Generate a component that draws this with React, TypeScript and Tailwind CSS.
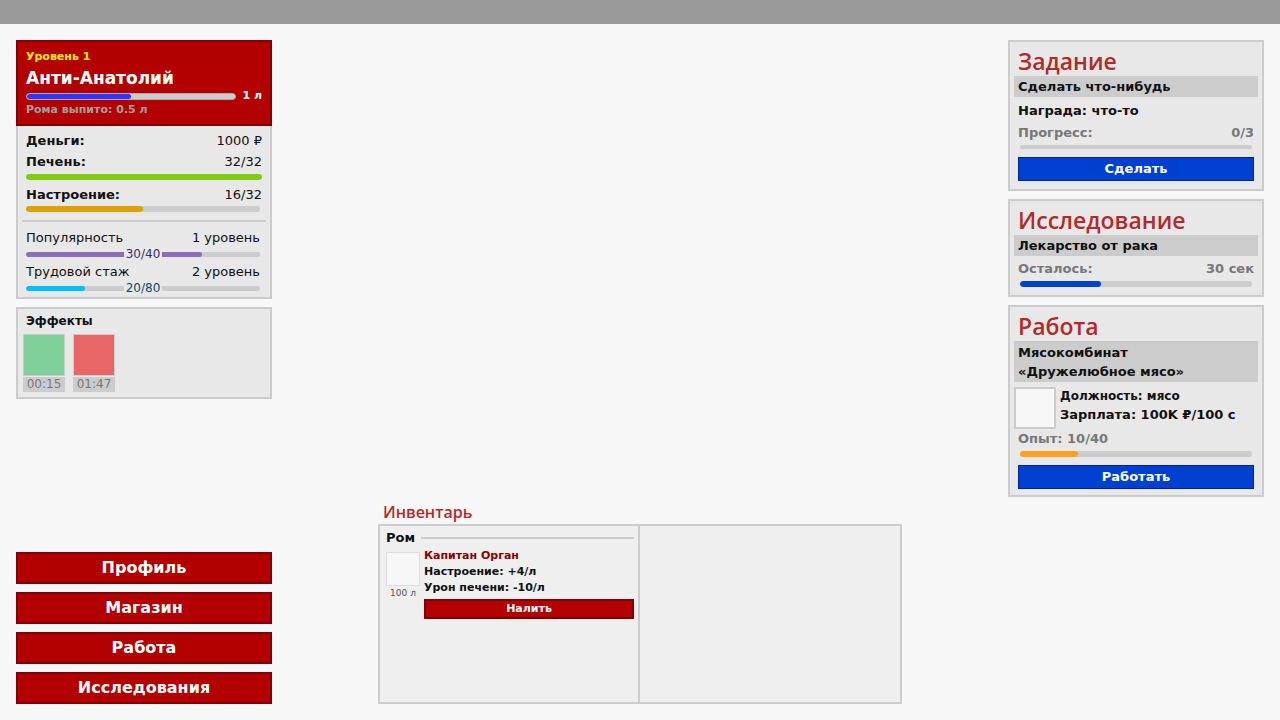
import React from "react";

const F = { fontFamily: '"DejaVu Sans", "Open Sans", sans-serif' };
const T = { fontFamily: '"Open Sans", "DejaVu Sans", sans-serif' };

function Bar({ pct, color, track = "bg-[#cccccc]", h = "h-[6px]" }: { pct: number; color: string; track?: string; h?: string }) {
  return (
    <div className={`w-full ${h} rounded-full ${track} overflow-hidden`}>
      <div className={`h-full rounded-full ${color}`} style={{ width: `${pct}%` }} />
    </div>
  );
}

function LabeledBar({ pct, color, label, labelColor }: { pct: number; color: string; label: string; labelColor: string }) {
  return (
    <div className="relative h-[14px] flex items-center">
      <div className="w-full h-[5px] rounded-full bg-[#cccccc] overflow-hidden">
        <div className={`h-full rounded-full ${color}`} style={{ width: `${pct}%` }} />
      </div>
      <div className="absolute inset-0 flex items-center justify-center">
        <span className={`px-[2px] bg-[#e8e8e8] text-[12px] leading-[14px] ${labelColor}`}>{label}</span>
      </div>
    </div>
  );
}

function NavButton({ children }: { children: React.ReactNode }) {
  return (
    <div className="h-[32px] bg-[#b30000] border-2 border-[#800000] flex items-center justify-center text-white text-[16px] font-bold">
      {children}
    </div>
  );
}

function Panel({ title, pb, children }: { title: string; pb: string; children: React.ReactNode }) {
  return (
    <div className={`bg-[#e8e8e8] border-2 border-[#cccccc] px-[4px] pt-[4px] ${pb}`}>
      <div className="px-[4px] h-[30px] leading-[30px] text-[23px] font-semibold text-[#b22a2a]" style={T}>{title}</div>
      {children}
    </div>
  );
}

function Band({ children, h = "h-[21px]" }: { children: React.ReactNode; h?: string }) {
  return (
    <div className={`bg-[#cccccc] ${h} px-[4px] flex flex-col justify-center text-[13px] leading-[19px] font-bold text-[#111]`}>{children}</div>
  );
}

function BlueButton({ children }: { children: React.ReactNode }) {
  return (
    <div className="mx-[4px] h-[24px] bg-[#0040d0] border border-[#0020a0] flex items-center justify-center text-white text-[13px] font-bold">
      {children}
    </div>
  );
}

export default function App() {
  return (
    <div className="w-[1280px] h-[720px] bg-[#f7f7f7] flex flex-col text-[#111]" style={F}>
      <div className="h-[24px] bg-[#9a9a9a]" />
      <div className="flex-1 flex p-[16px] min-h-0">
        {/* Left column */}
        <div className="w-[256px] flex flex-col">
          <div className="h-[86px] bg-[#b30000] border-2 border-[#800000] px-[8px] pt-[8px]">
            <div className="h-[14px] leading-[14px] text-[11px] font-bold text-[#ffee00]">Уровень 1</div>
            <div className="mt-[4px] h-[20px] leading-[20px] text-[17px] font-bold text-white">Анти-Анатолий</div>
            <div className="mt-[2px] h-[12px] flex items-center gap-[6px]">
              <div className="flex-1 h-[7px] rounded-full bg-[#cccccc] border border-[#aaaaaa] overflow-hidden">
                <div className="h-full w-1/2 rounded-full bg-[#3333ff]" />
              </div>
              <span className="text-[11px] font-bold text-white leading-[12px]">1 л</span>
            </div>
            <div className="mt-[1px] h-[14px] leading-[14px] text-[11px] font-bold text-[#a0a0a0]">Рома выпито: 0.5 л</div>
          </div>
          <div className="bg-[#e8e8e8] border-2 border-t-0 border-[#cccccc] px-[4px] pt-[6px] pb-[2px]">
            <div className="px-[4px]">
              <div className="h-[18px] flex justify-between items-center text-[13px] font-bold">
                <span>Деньги:</span>
                <span className="font-normal">1000 ₽</span>
              </div>
              <div className="mt-[3px] h-[18px] flex justify-between items-center text-[13px] font-bold">
                <span>Печень:</span>
                <span className="font-normal">32/32</span>
              </div>
              <div className="mt-[3px]">
                <Bar pct={100} color="bg-[#80cc10]" />
              </div>
              <div className="mt-[6px] h-[18px] flex justify-between items-center text-[13px] font-bold">
                <span>Настроение:</span>
                <span className="font-normal">16/32</span>
              </div>
              <div className="mt-[2px] pr-[2px]">
                <Bar pct={50} color="bg-[#e0a000]" />
              </div>
            </div>
            <div className="mt-[8px] h-[2px] bg-[#cccccc]" />
            <div className="px-[4px] pr-[6px]">
              <div className="mt-[7px] h-[18px] flex justify-between items-center text-[13px]">
                <span>Популярность</span>
                <span>1 уровень</span>
              </div>
              <LabeledBar pct={75} color="bg-[#8a6fb8]" label="30/40" labelColor="text-[#3a2a6a]" />
              <div className="mt-[2px] h-[18px] flex justify-between items-center text-[13px]">
                <span>Трудовой стаж</span>
                <span>2 уровень</span>
              </div>
              <LabeledBar pct={25} color="bg-[#00bfff]" label="20/80" labelColor="text-[#0a4a6a]" />
            </div>
          </div>
          <div className="mt-[8px] h-[92px] bg-[#e8e8e8] border-2 border-[#cccccc] px-[5px] pt-[5px]">
            <div className="pl-[3px] h-[14px] leading-[14px] text-[12px] font-bold">Эффекты</div>
            <div className="mt-[6px] flex gap-[8px]">
              <div className="w-[42px] flex flex-col">
                <div className="h-[42px] bg-[#80d09a] border border-[#cccccc]" />
                <div className="mt-[1px] h-[15px] bg-[#cccccc] text-[#777] text-[12px] leading-[15px] text-center">00:15</div>
              </div>
              <div className="w-[42px] flex flex-col">
                <div className="h-[42px] bg-[#e86666] border border-[#cccccc]" />
                <div className="mt-[1px] h-[15px] bg-[#cccccc] text-[#777] text-[12px] leading-[15px] text-center">01:47</div>
              </div>
            </div>
          </div>
          <div className="mt-auto flex flex-col gap-[8px]">
            <NavButton>Профиль</NavButton>
            <NavButton>Магазин</NavButton>
            <NavButton>Работа</NavButton>
            <NavButton>Исследования</NavButton>
          </div>
        </div>

        {/* Center */}
        <div className="flex-1 flex flex-col justify-end items-center">
          <div className="w-[524px]">
            <div className="pl-[5px] h-[24px] leading-[24px] text-[16px] font-semibold text-[#b22a2a]" style={T}>Инвентарь</div>
            <div className="h-[180px] border-2 border-[#cccccc] bg-[#efefef] grid grid-cols-2">
              <div className="border-r-2 border-[#cccccc] pl-[6px] pr-[4px] pt-[2px]">
                <div className="h-[20px] flex items-center gap-[6px]">
                  <span className="text-[13px] font-bold">Ром</span>
                  <div className="flex-1 h-[2px] bg-[#cccccc]" />
                </div>
                <div className="mt-[4px] flex gap-[4px]">
                  <div className="w-[34px] flex flex-col items-center">
                    <div className="w-[34px] h-[34px] bg-[#f7f7f7] border border-[#dddddd]" />
                    <div className="mt-[1px] text-[9px] leading-[12px] text-[#555]">100 л</div>
                  </div>
                  <div className="flex-1 -mt-[4px]">
                    <div className="h-[16px] leading-[16px] text-[11px] font-bold text-[#8b0000]">Капитан Орган</div>
                    <div className="h-[16px] leading-[16px] text-[11px] font-bold">Настроение: +4/л</div>
                    <div className="h-[16px] leading-[16px] text-[11px] font-bold">Урон печени: -10/л</div>
                    <div className="mt-[3px] h-[20px] bg-[#b30000] border-2 border-[#800000] flex items-center justify-center text-white text-[11px] font-bold">Налить</div>
                  </div>
                </div>
              </div>
              <div />
            </div>
          </div>
        </div>

        {/* Right column */}
        <div className="w-[256px] flex flex-col gap-[8px]">
          <Panel title="Задание" pb="pb-[8px]">
            <Band>Сделать что-нибудь</Band>
            <div className="px-[4px]">
              <div className="mt-[5px] h-[18px] leading-[18px] text-[13px] font-bold">Награда: что-то</div>
              <div className="mt-[4px] h-[18px] flex justify-between items-center text-[13px] font-bold text-[#777]">
                <span>Прогресс:</span>
                <span>0/3</span>
              </div>
            </div>
            <div className="mx-[6px] mt-[3px]">
              <Bar pct={0} color="bg-[#0044cc]" h="h-[4px]" />
            </div>
            <div className="mt-[8px]">
              <BlueButton>Сделать</BlueButton>
            </div>
          </Panel>
          <Panel title="Исследование" pb="pb-[8px]">
            <Band>Лекарство от рака</Band>
            <div className="px-[4px] mt-[4px] h-[18px] flex justify-between items-center text-[13px] font-bold text-[#777]">
              <span>Осталось:</span>
              <span>30 сек</span>
            </div>
            <div className="mx-[6px] mt-[3px]">
              <Bar pct={35} color="bg-[#0044cc]" />
            </div>
          </Panel>
          <Panel title="Работа" pb="pb-[6px]">
            <Band h="h-[41px]">
              <div>Мясокомбинат</div>
              <div>«Дружелюбное мясо»</div>
            </Band>
            <div className="mt-[5px] flex gap-[4px]">
              <div className="w-[42px] h-[42px] bg-[#f7f7f7] border-2 border-[#cccccc]" />
              <div>
                <div className="h-[18px] leading-[18px] text-[12px] font-bold">Должность: мясо</div>
                <div className="h-[20px] leading-[20px] text-[13px] font-bold">Зарплата: 100K ₽/100 с</div>
              </div>
            </div>
            <div className="px-[4px] mt-[1px] h-[18px] leading-[18px] text-[13px] font-bold text-[#777]">Опыт: 10/40</div>
            <div className="mx-[6px] mt-[3px]">
              <Bar pct={25} color="bg-[#ffa020]" />
            </div>
            <div className="mt-[8px]">
              <BlueButton>Работать</BlueButton>
            </div>
          </Panel>
        </div>
      </div>
    </div>
  );
}
